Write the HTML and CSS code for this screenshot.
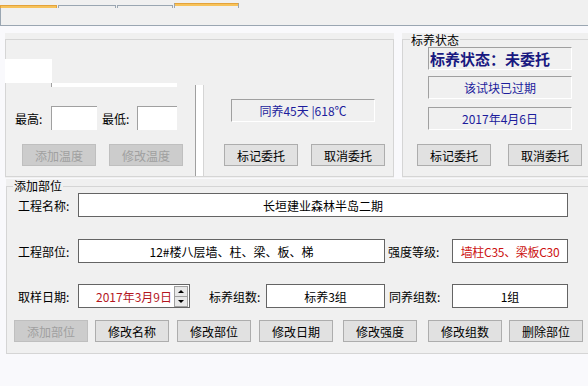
FILE: index.html
```html
<!DOCTYPE html>
<html lang="zh-CN">
<head>
    <meta charset="UTF-8">
    <title>标养管理</title>
    <link rel="stylesheet" href="styles.css">
</head>
<body>
    <div class="tabstrip">
        <span class="tab tab-on"></span>
        <span class="tab tab-2"></span>
        <span class="tab tab-3"></span>
        <span class="tab tab-hot"></span>
    </div>
    <div class="tabpage"></div>

    <main class="page">
        <div class="top-row">
            <!-- temperature -->
            <section class="group temp-group">
                <div class="frame temp-frame">
                    <div class="temp-left">
                        <div class="white-patch"></div>
                        <div class="white-strip"></div>
                        <div class="range-row">
                            <label class="lbl-high">最高:</label>
                            <div class="field-sunken field-high"></div>
                            <label class="lbl-low">最低:</label>
                            <div class="field-sunken field-low"></div>
                        </div>
                        <div class="btn-row">
                            <button class="btn" disabled>添加温度</button>
                            <button class="btn" disabled>修改温度</button>
                        </div>
                    </div>
                    <div class="divider"></div>
                    <div class="temp-right">
                        <div class="readout">同养45天 |618℃</div>
                        <div class="btn-row">
                            <button class="btn">标记委托</button>
                            <button class="btn">取消委托</button>
                        </div>
                    </div>
                </div>
            </section>

            <!-- status -->
            <section class="group status-group">
                <div class="frame status-frame">
                    <span class="group-title">标养状态</span>
                    <div class="readout status-big">标养状态：未委托</div>
                    <div class="readout status-2">该试块已过期</div>
                    <div class="readout status-3">2017年4月6日</div>
                    <div class="btn-row">
                        <button class="btn">标记委托</button>
                        <button class="btn">取消委托</button>
                    </div>
                </div>
            </section>
        </div>

        <!-- add part -->
        <section class="group part-group">
            <div class="frame part-frame">
                <span class="group-title title-part">添加部位</span>
                <div class="form-row">
                    <label>工程名称:</label>
                    <div class="text-box box-name">长垣建业森林半岛二期</div>
                </div>
                <div class="form-row row-2">
                    <label>工程部位:</label>
                    <div class="text-box box-part">12#楼八层墙、柱、梁、板、梯</div>
                    <label class="lbl-grade">强度等级:</label>
                    <div class="text-box box-grade">墙柱C35、梁板C30</div>
                </div>
                <div class="form-row row-3">
                    <label>取样日期:</label>
                    <div class="text-box date-box">
                        <span class="date-text">2017年3月9日</span>
                        <span class="spinner">
                            <span class="spin spin-up"></span>
                            <span class="spin spin-down"></span>
                        </span>
                    </div>
                    <label class="lbl-std">标养组数:</label>
                    <div class="text-box box-std">标养3组</div>
                    <label class="lbl-same">同养组数:</label>
                    <div class="text-box box-same">1组</div>
                </div>
                <div class="btn-row part-buttons">
                    <button class="btn" disabled>添加部位</button>
                    <button class="btn">修改名称</button>
                    <button class="btn">修改部位</button>
                    <button class="btn">修改日期</button>
                    <button class="btn">修改强度</button>
                    <button class="btn">修改组数</button>
                    <button class="btn">删除部位</button>
                </div>
            </div>
        </section>
    </main>
</body>
</html>
```

FILE: styles.css
```css
/* Global */
* {
    box-sizing: border-box;
}

body {
    margin: 0;
    width: 588px;
    height: 386px;
    overflow: hidden;
    background-color: #f9f9fc;
    font-family: "Noto Sans CJK SC", sans-serif;
    font-size: 12px;
    color: #000;
}

label {
    white-space: nowrap;
    flex-shrink: 0;
}

/* Tabs */
.tabstrip {
    display: flex;
    height: 8px;
    background-color: #f0f0f0;
}

.tab {
    height: 3px;
    margin-top: 5px;
    margin-left: 1px;
    border: 1px solid #9aa6b2;
    border-bottom: none;
}

.tab-on {
    width: 57px;
    margin-left: 0;
    border-color: #e3a33c;
    background-color: #f7c25a;
}

.tab-2 {
    width: 58px;
}

.tab-3 {
    width: 56px;
}

.tab-hot {
    width: 65px;
    height: 5px;
    margin-top: 3px;
    border-top-color: #e3a33c;
    background: linear-gradient(#f7c25a 0 2px, #f0f0f0 2px);
}

.tabpage {
    height: 18px;
    background-color: #f0f0f0;
    border-left: 1px solid #9aa6b2;
    border-bottom: 1px solid #9aa6b2;
}

/* Group boxes */
.group {
    flex-shrink: 0;
    background-color: #f0f0f0;
}

.frame {
    border: 1px solid #d5d5d5;
}

.group-title {
    display: block;
    width: max-content;
    margin: -7px 0 0 7px;
    padding: 0 1px;
    line-height: 14px;
    background-color: #f0f0f0;
}

.btn-row {
    display: flex;
    gap: 13px;
}

.btn {
    flex-shrink: 0;
    width: 74px;
    height: 22px;
    padding: 0;
    display: flex;
    align-items: center;
    justify-content: center;
    background-color: #e1e1e1;
    border: 1px solid #adadad;
    font: inherit;
    color: #000;
}

.btn:disabled {
    background-color: #cccccc;
    border-color: #bfbfbf;
    color: #a0a0a0;
}

.readout {
    width: 144px;
    height: 23px;
    display: flex;
    align-items: center;
    justify-content: center;
    border-top: 1px solid #a0a0a0;
    border-left: 1px solid #a0a0a0;
    border-right: 1px solid #fff;
    border-bottom: 1px solid #fff;
    color: #1c1c9c;
}

/* Top row */
.top-row {
    display: flex;
    margin-top: 7px;
    padding-left: 5px;
}

.temp-group {
    width: 389px;
    height: 145px;
    padding-top: 6px;
}

.temp-frame {
    height: 138px;
    display: flex;
}

.temp-left {
    width: 189px;
    flex-shrink: 0;
}

.white-patch {
    width: 47px;
    height: 24px;
    margin: 19px 0 0 -1px;
    background-color: #fff;
}

.white-strip {
    width: 126px;
    height: 4px;
    margin-left: 45px;
    background-color: #fff;
    border-left: 1px solid #a0a0a0;
}

.range-row {
    display: flex;
    align-items: center;
    height: 24px;
    margin-top: 19px;
    padding-left: 9px;
}

.lbl-high {
    width: 36px;
}

.lbl-low {
    width: 35px;
    margin-left: 5px;
}

.field-sunken {
    height: 24px;
    background-color: #fff;
    border-top: 1px solid #a0a0a0;
    border-left: 1px solid #a0a0a0;
}

.field-high {
    width: 46px;
}

.field-low {
    width: 40px;
}

.temp-left .btn-row {
    margin-top: 14px;
    padding-left: 16px;
}

.divider {
    width: 9px;
    flex-shrink: 0;
    margin-top: 45px;
    background-color: #fff;
    border-left: 1px solid #a0a0a0;
    border-right: 1px solid #d5d5d5;
}

.temp-right {
    flex: 1;
}

.temp-right .readout {
    margin: 59px 0 0 27px;
}

.temp-right .btn-row {
    margin-top: 22px;
    padding-left: 20px;
}

/* Status */
.status-group {
    width: 200px;
    height: 145px;
    margin-left: 8px;
    padding-top: 6px;
}

.status-frame {
    height: 138px;
}

.status-frame .readout {
    margin-left: 25px;
}

.status-big {
    justify-content: flex-start;
    padding-left: 1px;
    font-size: 15px;
    font-weight: bold;
    color: #181880;
}

.status-2 {
    margin-top: 6px;
}

.status-3 {
    margin-top: 8px;
}

.status-frame .btn-row {
    margin-top: 14px;
    padding-left: 14px;
    gap: 17px;
}

/* Add part */
.part-group {
    width: 600px;
    margin: 1px 0 0 6px;
    padding-top: 7px;
}

.part-frame {
    padding-bottom: 11px;
}

.title-part {
    margin: -8px 0 0 6px;
}

.form-row {
    display: flex;
    align-items: center;
    height: 24px;
    padding-left: 11px;
}

.form-row label {
    width: 60px;
}

.row-2 {
    margin-top: 22px;
}

.row-3 {
    margin-top: 21px;
}

.text-box {
    flex-shrink: 0;
    height: 24px;
    display: flex;
    align-items: center;
    justify-content: center;
    background-color: #fff;
    border: 1px solid #646464;
}

.box-name {
    width: 490px;
}

.box-part {
    width: 307px;
}

.form-row .lbl-grade {
    width: 67px;
    padding-left: 3px;
}

.box-grade {
    width: 116px;
    color: #cc1111;
    letter-spacing: -0.3px;
    white-space: nowrap;
}

.date-box {
    width: 112px;
    justify-content: flex-start;
    padding-left: 17px;
}

.date-text {
    color: #b4161e;
}

.spinner {
    display: flex;
    flex-direction: column;
    width: 14px;
    height: 21px;
    margin-left: auto;
    margin-right: 1px;
}

.spin {
    position: relative;
    flex: 1;
    background-color: #e8e8e8;
    border: 1px solid #a0a0a0;
}

.spin-down {
    border-top: none;
}

.spin::after {
    content: "";
    position: absolute;
    left: 3px;
    top: 3px;
    border-left: 3px solid transparent;
    border-right: 3px solid transparent;
}

.spin-up::after {
    border-bottom: 3px solid #000;
}

.spin-down::after {
    top: 3px;
    border-top: 3px solid #000;
}

.form-row .lbl-std {
    width: 57px;
    margin-left: 19px;
}

.box-std {
    width: 119px;
}

.form-row .lbl-same {
    width: 67px;
    padding-left: 4px;
}

.box-same {
    width: 116px;
}

.part-buttons {
    margin-top: 12px;
    padding-left: 7px;
    gap: 8px;
}

.part-buttons .btn:nth-child(2),
.part-buttons .btn:nth-child(7) {
    margin-left: -1px;
}

.part-buttons .btn:nth-child(5) {
    margin-left: 2px;
}

.part-buttons .btn:nth-child(6) {
    margin-left: 3px;
}
```
